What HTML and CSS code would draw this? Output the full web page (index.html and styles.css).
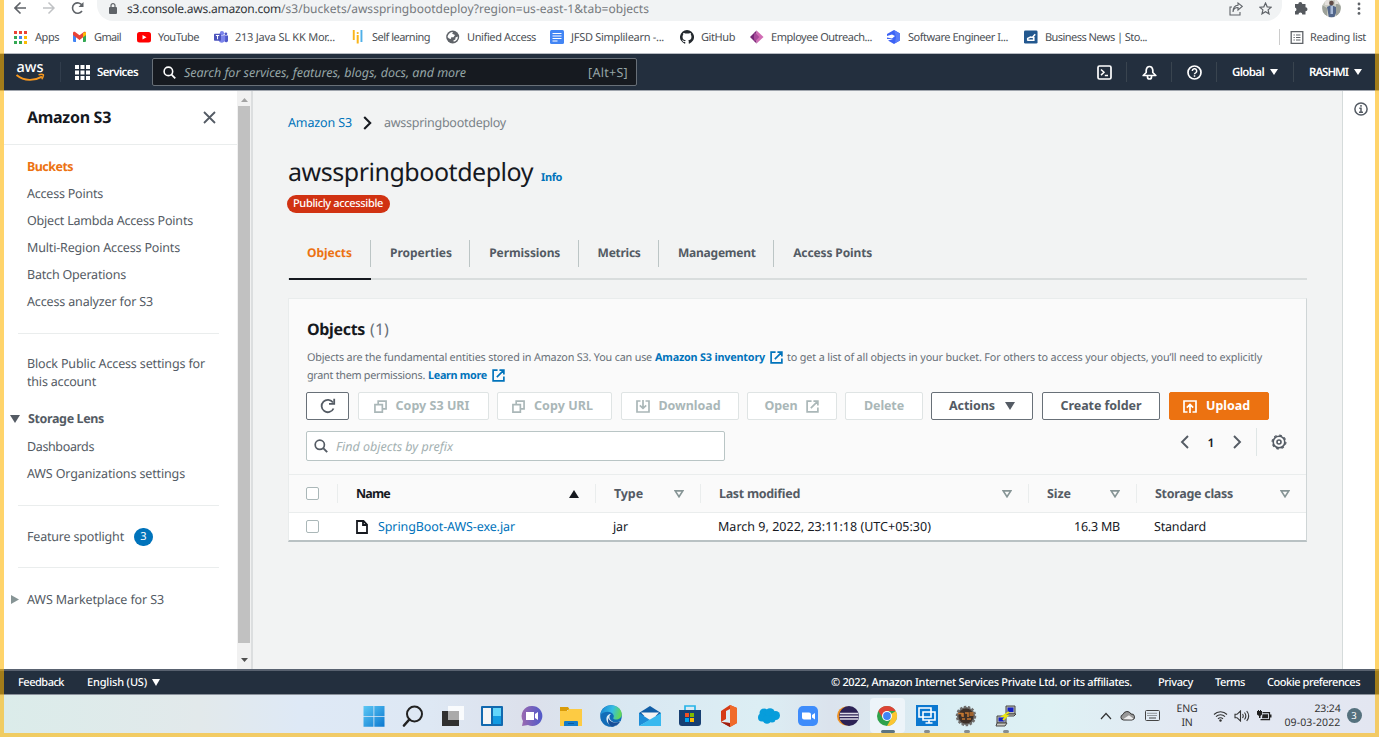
FILE: index.html
```html
<!DOCTYPE html>
<html lang="en">
<head>
<meta charset="utf-8">
<title>awsspringbootdeploy - S3 bucket</title>
<link rel="stylesheet" href="styles.css">
</head>
<body>
<svg class="defs" width="0" height="0">
  <symbol id="ext" viewBox="0 0 14 14"><path d="M6 1.2H1.2v11.6h11.6V8M8 1.2h4.8V6M12.5 1.5L5.2 8.8" fill="none" stroke="currentColor" stroke-width="1.8"/></symbol>
  <symbol id="copy" viewBox="0 0 14 14"><path d="M1 5h8v8H1zM4.5 5V1.2H13v8.3H9" fill="none" stroke="currentColor" stroke-width="1.8"/></symbol>
  <symbol id="glass" viewBox="0 0 14 14"><circle cx="5.8" cy="5.8" r="4.6" fill="none" stroke="currentColor" stroke-width="1.7"/><path d="M9.2 9.2l4 4" stroke="currentColor" stroke-width="1.9"/></symbol>
  <symbol id="down" viewBox="0 0 10 8"><path d="M0 0h10L5 8z" fill="currentColor"/></symbol>
  <symbol id="sort" viewBox="0 0 10 8"><path d="M1.2.9h7.6L5 6.8z" fill="none" stroke="#879596" stroke-width="1.6"/></symbol>
</svg>
<div class="screen">
  <header class="chrome">
    <div class="toolbar">
      <svg class="i-back" width="12" height="14" viewBox="0 0 12 14"><path d="M12 7H1.2M6.5 1.5L1 7l5.500 5.500" fill="none" stroke="#5f6368" stroke-width="1.6"/></svg>
      <svg class="i-fwd" width="12" height="14" viewBox="0 0 12 14"><path d="M0 7h10.800M5.500 1.500L11 7l-5.500 5.500" fill="none" stroke="#c0c2c5" stroke-width="1.500"/></svg>
      <svg class="i-reload" width="13" height="14" viewBox="0 0 13 14"><path d="M11 10a5.200 5.200 0 1 1 .2-5.600" fill="none" stroke="#5f6368" stroke-width="1.600"/><path d="M12.500 1v5h-5z" fill="#5f6368"/></svg>
      <div class="url">
        <svg width="8" height="11" viewBox="0 0 8 11"><rect y="4" width="8" height="7" rx="1" fill="#5f6368"/><path d="M2 4V2.600a2 2 0 0 1 4 0V4" fill="none" stroke="#5f6368" stroke-width="1.200"/></svg>
        <span class="addr"><span class="host" data-w="154">s3.console.aws.amazon.com</span><span class="path" data-w="368">/s3/buckets/awsspringbootdeploy?region=us-east-1&amp;tab=objects</span></span>
        <svg class="i-share" width="14" height="14" viewBox="0 0 14 14"><path d="M3 5H1v8h10v-3M4 10c.3-3 2-4.500 5-4.500V8l4.300-3.700L9 1v2.300C5.500 3.500 4 6 4 10z" fill="none" stroke="#5f6368" stroke-width="1.100"/></svg>
        <svg class="i-star" width="13" height="13" viewBox="0 0 14 14"><path d="M7 1.200l1.800 4 4.300.4-3.300 2.900 1 4.300L7 10.500l-3.800 2.300 1-4.300L.9 5.600l4.300-.4z" fill="none" stroke="#5f6368" stroke-width="1.300"/></svg>
      </div>
      <svg class="i-puzzle" width="14" height="14" viewBox="0 0 14 14"><path d="M4.300 3a2 2 0 0 1 4 0h3.200v3.200a2 2 0 0 1 0 4V13.500H8.300a1.900 1.900 0 0 0-3.800 0H1v-3.200a1.900 1.900 0 0 0 0-3.700V3z" fill="#55595e"/></svg>
      <svg class="i-avatar" width="19" height="19" viewBox="0 0 19 19"><clipPath id="av"><circle cx="9.500" cy="9" r="9.300"/></clipPath><g clip-path="url(#av)"><path fill="#c9cbc2" d="M0 0h19v19H0z"/><path fill="#9da199" d="M0 6l5 3v10H0zM14 4l5 3v11h-5z"/><path fill="#e4e0dc" d="M3 0h4v6H3zM13 0h3v5h-3z"/><path fill="#52668a" d="M5 8l4-2 5 2v6l-2 5H7z"/><path fill="#a9bbd8" d="M8.500 7h2.500v8H8.500z"/><circle cx="9.500" cy="4" r="2.300" fill="#5f4a45"/></g></svg>
      <svg class="i-dots" width="4" height="13" viewBox="0 0 4 13"><g fill="#5f6368"><circle cx="2" cy="2" r="1.400"/><circle cx="2" cy="6.700" r="1.400"/><circle cx="2" cy="11.400" r="1.400"/></g></svg>
    </div>
    <nav class="marks">
      <a><svg width="14" height="14" viewBox="0 0 14 14"><path fill="#ea4335" d="M0 1h3v3H0zM5 1h3v3H5zM10 1h3v3h-3z"/><path fill="#34a853" d="M0 6h3v3H0zM0 11h3v3H0z"/><path fill="#4285f4" d="M5 6h3v3H5z"/><path fill="#fbbc04" d="M10 6h3v3h-3zM10 11h3v3h-3z"/><path fill="#34a853" d="M5 11h3v3H5z"/></svg><span data-w="24">Apps</span></a>
      <a><svg width="14" height="14" viewBox="0 0 14 14"><path fill="#4285f4" d="M0 3l3 2v7H1a1 1 0 0 1-1-1z"/><path fill="#34a853" d="M13 3l-3 2v7h2a1 1 0 0 0 1-1z"/><path fill="#ea4335" d="M0 3.200C0 1.800 1.500 1.500 2.500 2.300l4 3 4-3C11.500 1.500 13 1.800 13 3.200V5L6.500 10 0 5z"/><path fill="#fbbc04" d="M10 3l3-1v3l-3 2.200z"/></svg><span data-w="27">Gmail</span></a>
      <a><svg width="14" height="14" viewBox="0 0 14 14"><rect y="2" width="14" height="10.500" rx="2.500" fill="#f00"/><path d="M5.500 5v4.500l4-2.250z" fill="#fff"/></svg><span data-w="41">YouTube</span></a>
      <a><svg width="15" height="14" viewBox="0 0 15 14"><circle cx="8.500" cy="3" r="2.300" fill="#7b83eb"/><circle cx="12.700" cy="3.600" r="1.500" fill="#5059c9"/><path fill="#5059c9" d="M10 5.500h5V10a2 2 0 0 1-4 1z"/><path fill="#7b83eb" d="M5 5.500h7v4.500a3.700 3.700 0 0 1-7 1z"/><rect y="3.500" width="7.500" height="7.500" rx=".8" fill="#4b53bc"/><path d="M2 5.500h3.600M3.800 5.500v4" stroke="#fff" stroke-width="1.100"/></svg><span data-w="100">213 Java SL KK Mor...</span></a>
      <a><svg width="14" height="14" viewBox="0 0 14 14"><path fill="#f9b51b" d="M1.800 0h1.900v10H1.800zM5.700 5h2v8.500h-2z"/><circle cx="6.700" cy="3" r="1.100" fill="#f9b51b"/><path fill="#4fb0e8" d="M9.500 0h1.900v12H9.500z"/></svg><span data-w="58">Self learning</span></a>
      <a><svg width="14" height="14" viewBox="0 0 14 14"><circle cx="6.700" cy="7" r="6.500" fill="#5f6368"/><path fill="#fff" d="M1.500 7C2 4 4 2 7 2l-.8 1.800L9 5 7.500 7.300H5.200L5 9 3 8.500zM9.500 7.500l2.300-1c.3 2.300-1.300 4.700-4 5.300l-.5-1.300 2-1z"/></svg><span data-w="69">Unified Access</span></a>
      <a><svg width="14" height="14" viewBox="0 0 14 14"><rect width="14" height="14" rx="1.500" fill="#4285f4"/><path d="M2.500 3.500h9M2.500 6h9M2.500 8.500h9M2.500 11h5" stroke="#fff" stroke-width="1.200"/></svg><span data-w="93">JFSD Simplilearn -...</span></a>
      <a><svg width="14" height="14" viewBox="0 0 16 16"><path fill="#24292e" d="M8 0a8 8 0 0 0-2.530 15.590c.4.070.55-.17.55-.38v-1.490c-2.230.48-2.690-.950-2.690-.950-.36-.92-.89-1.170-.89-1.170-.73-.5.050-.49.050-.49.81.06 1.230.83 1.230.83.72 1.230 1.870.87 2.330.66.07-.52.28-.87.500-1.070-1.780-.200-3.640-.89-3.640-3.950 0-.87.310-1.590.820-2.150-.080-.200-.360-1.020.080-2.120 0 0 .670-.210 2.200.820a7.600 7.600 0 0 1 4 0c1.530-1.040 2.200-.82 2.200-.82.44 1.100.16 1.920.08 2.120.51.56.82 1.270.82 2.150 0 3.070-1.870 3.750-3.650 3.950.29.25.54.73.54 1.480v2.200c0 .21.15.46.55.38A8 8 0 0 0 8 0z"/></svg><span data-w="34">GitHub</span></a>
      <a><svg width="15" height="14" viewBox="0 0 15 14"><path fill="#742774" d="M7 0v14L0 7z"/><path fill="#d16cb4" d="M7 0l7.500 7L7 14z"/><path fill="#a84a9a" d="M5 2l5 5-5 5-1-5z"/></svg><span data-w="101">Employee Outreach...</span></a>
      <a><svg width="14" height="14" viewBox="0 0 14 14"><path fill="#3d63f5" d="M7 0l6 3.500v7L7 14l-6-3.500L6 9 0 9V4z"/><path d="M0 6l5-1.500L8 6 5 8.500 0 7.500z" fill="#fff"/><path d="M7 0l6 3.500v7L8 13l1-6z" fill="#587cf8"/></svg><span data-w="100">Software Engineer I...</span></a>
      <a><svg width="15" height="14" viewBox="0 0 15 14"><rect width="14.500" height="14" rx="1.500" fill="#23588f"/><path d="M4 11V8.500L7 7l2 .5 3-3.500M4 10.500h6.500V7" fill="none" stroke="#fff" stroke-width="1.700"/></svg><span data-w="102">Business News | Sto...</span></a>
      <a class="reading"><svg width="13" height="13" viewBox="0 0 13 13"><path d="M.7.7h11.600v11.600H.7z" fill="none" stroke="#5f6368" stroke-width="1.300"/><path d="M3 4h1.300M5.500 4H10M3 6.500h1.300M5.500 6.500H10M3 9h1.300M5.500 9H10" stroke="#5f6368" stroke-width="1.200"/></svg><span data-w="56">Reading list</span></a>
    </nav>
  </header>

  <header class="aws">
    <svg class="logo" width="29" height="24" viewBox="0 -4 29 24"><text x="0.500" y="10" font-size="14.500" textLength="27" lengthAdjust="spacingAndGlyphs" fill="#fff">aws</text><path d="M.5 13c8 6.500 18 6 25.500 1.600" fill="none" stroke="#f7981f" stroke-width="1.900"/><path d="M22.500 12.800c2.500-.8 5.200-.6 5 .3s-.6 3-1.800 4.200" fill="none" stroke="#f7981f" stroke-width="1.400"/></svg>
    <div class="services">
      <svg width="15" height="15" viewBox="0 0 15 15"><path fill="#fff" d="M0 0h4v4H0zM5.500 0h4v4h-4zM11 0h4v4h-4zM0 5.500h4v4H0zM5.500 5.500h4v4h-4zM11 5.500h4v4h-4zM0 11h4v4H0zM5.500 11h4v4h-4zM11 11h4v4h-4z"/></svg>
      <b data-w="41">Services</b>
    </div>
    <div class="search"><svg width="13" height="13"><use href="#glass"/></svg><i data-w="282">Search for services, features, blogs, docs, and more</i><span data-w="40">[Alt+S]</span></div>
    <div class="tools">
      <div><svg width="15" height="15" viewBox="0 0 15 15"><rect x="1" y="1" width="13" height="13" rx="1.500" fill="none" stroke="#fff" stroke-width="1.700"/><path d="M4 4.500l3 2.800-3 2.800M7.800 10.500H11" fill="none" stroke="#fff" stroke-width="1.500"/></svg></div>
      <div><svg width="15" height="15" viewBox="0 0 15 15"><path d="M1.200 10.500L4.200 7.500V5q.5-3.500 3.300-3.500T10.800 5v2.500l3 3zM5.500 11v1a2 2 0 0 0 4 0v-1" fill="none" stroke="#fff" stroke-width="1.700" stroke-linejoin="round"/></svg></div>
      <div><svg width="15" height="15" viewBox="0 0 15 15"><circle cx="7.500" cy="7.500" r="6.500" fill="none" stroke="#fff" stroke-width="1.700"/><path d="M5.300 5.900a2.200 2.200 0 1 1 3.300 1.900c-.8.4-1.100.6-1.100 1.400M7.500 10.200v1.600" fill="none" stroke="#fff" stroke-width="1.500"/></svg></div>
      <div><b data-w="32">Global</b><svg width="8" height="6" viewBox="0 0 10 8" preserveAspectRatio="none"><use href="#down"/></svg></div>
      <div><b data-w="39">RASHMI</b><svg width="8" height="6" viewBox="0 0 10 8" preserveAspectRatio="none"><use href="#down"/></svg></div>
    </div>
  </header>

  <div class="body">
    <aside class="side">
      <div class="side-head"><h2 data-w="84">Amazon S3</h2><svg width="13" height="13" viewBox="0 0 13 13"><path d="M1 1l11 11M12 1L1 12" stroke="#545b64" stroke-width="1.800"/></svg></div>
      <ul>
        <li class="on"><span data-w="46">Buckets</span></li>
        <li><span data-w="76">Access Points</span></li>
        <li><span data-w="166">Object Lambda Access Points</span></li>
        <li><span data-w="153">Multi-Region Access Points</span></li>
        <li><span data-w="99">Batch Operations</span></li>
        <li><span data-w="126">Access analyzer for S3</span></li>
      </ul>
      <hr>
      <p class="block"><span data-w="178">Block Public Access settings for</span><br><span data-w="69">this account</span></p>
      <div class="sect lens"><svg width="10" height="8"><use href="#down"/></svg><b data-w="76">Storage Lens</b></div>
      <ul class="tight">
        <li><span data-w="67">Dashboards</span></li>
        <li><span data-w="158">AWS Organizations settings</span></li>
      </ul>
      <hr>
      <div class="feature"><span data-w="97">Feature spotlight</span><em>3</em></div>
      <hr>
      <div class="sect market"><svg width="8" height="9" viewBox="0 0 8 9"><path d="M0 0l8 4.500L0 9z" fill="#879596"/></svg><span data-w="137">AWS Marketplace for S3</span></div>
    </aside>
    <div class="scroll">
      <svg width="7" height="4" viewBox="0 0 7 4"><path d="M3.500 0L7 4H0z" fill="#a3a3a3"/></svg>
      <div class="thumb"></div>
      <svg width="7" height="4" viewBox="0 0 7 4"><path d="M0 0h7L3.500 4z" fill="#505050"/></svg>
    </div>

    <main class="main">
      <div class="crumbs"><a data-w="64">Amazon S3</a><svg width="9" height="14" viewBox="0 0 9 14"><path d="M1.200 1l6 6-6 6" fill="none" stroke="#16191f" stroke-width="2.100"/></svg><span data-w="122">awsspringbootdeploy</span></div>
      <div class="title"><h1 data-w="245">awsspringbootdeploy</h1><a data-w="21">Info</a></div>
      <div class="badge"><span data-w="90">Publicly accessible</span></div>
      <nav class="tabs">
        <a class="on"><span data-w="45">Objects</span></a>
        <a><span data-w="62">Properties</span></a>
        <a><span data-w="71">Permissions</span></a>
        <a><span data-w="43">Metrics</span></a>
        <a><span data-w="78">Management</span></a>
        <a><span data-w="79">Access Points</span></a>
      </nav>
      <section class="card">
        <h3><b data-w="58">Objects</b> <span data-w="19">(1)</span></h3>
        <div class="desc">
          <div><span data-w="345">Objects are the fundamental entities stored in Amazon S3. You can use</span><a data-w="110">Amazon S3 inventory</a><svg width="13" height="13"><use href="#ext"/></svg><span data-w="475">to get a list of all objects in your bucket. For others to access your objects, you’ll need to explicitly</span></div>
          <div><span data-w="118">grant them permissions.</span><a data-w="59">Learn more</a><svg width="13" height="13"><use href="#ext"/></svg></div>
        </div>
        <div class="buttons">
          <button class="b-refresh"><svg width="16" height="16" viewBox="0 0 16 16"><path d="M13.500 10.500A6.200 6.200 0 1 1 13 4.600" fill="none" stroke="#545b64" stroke-width="1.800"/><path d="M14.200.8v5H9" fill="none" stroke="#545b64" stroke-width="1.800"/></svg></button>
          <button class="b-uri off"><svg width="13" height="13"><use href="#copy"/></svg><b data-w="74">Copy S3 URI</b></button>
          <button class="b-url off"><svg width="13" height="13"><use href="#copy"/></svg><b data-w="59">Copy URL</b></button>
          <button class="b-dl off"><svg width="14" height="13" viewBox="0 0 14 13"><path d="M4.500 1H1v11h12V1H9.500M7 0v8M3.800 5.300L7 8.300l3.200-3" fill="none" stroke="currentColor" stroke-width="1.700"/></svg><b data-w="62">Download</b></button>
          <button class="b-open off"><b data-w="33">Open</b><svg width="13" height="13"><use href="#ext"/></svg></button>
          <button class="b-del off"><b data-w="40">Delete</b></button>
          <button class="b-act"><b data-w="46">Actions</b><svg width="10" height="8"><use href="#down"/></svg></button>
          <button class="b-new"><b data-w="81">Create folder</b></button>
          <button class="b-up"><svg width="14" height="13" viewBox="0 0 14 13"><path d="M4.500 12H1V1h12v11H9.500M7 13V5M3.800 7.700L7 4.500l3.200 3.200" fill="none" stroke="currentColor" stroke-width="1.700"/></svg><b data-w="44">Upload</b></button>
        </div>
        <div class="filter">
          <div class="find"><svg width="14" height="14"><use href="#glass"/></svg><i data-w="117">Find objects by prefix</i></div>
          <div class="pager">
            <svg width="9" height="14" viewBox="0 0 9 14"><path d="M8 1L2 7l6 6" fill="none" stroke="#545b64" stroke-width="1.900"/></svg>
            <b>1</b>
            <svg width="9" height="14" viewBox="0 0 9 14"><path d="M1 1l6 6-6 6" fill="none" stroke="#545b64" stroke-width="1.900"/></svg>
            <div class="gear"><svg width="16" height="16" viewBox="0 0 16 16"><circle cx="8" cy="8" r="5.800" fill="none" stroke="#545b64" stroke-width="1.600"/><circle cx="8" cy="8" r="6.900" fill="none" stroke="#545b64" stroke-width="1.200" stroke-dasharray="2.700 2.719"/><circle cx="8" cy="8" r="2" fill="none" stroke="#545b64" stroke-width="1.600"/></svg></div>
          </div>
        </div>
        <div class="row head">
          <div><span class="cb"></span></div>
          <div class="name"><b data-w="34">Name</b><svg width="10" height="8" viewBox="0 0 10 8"><path d="M5 0l5 8H0z" fill="#16191f"/></svg></div>
          <div><b data-w="29">Type</b><svg width="10" height="8"><use href="#sort"/></svg></div>
          <div><b data-w="81">Last modified</b><svg width="10" height="8"><use href="#sort"/></svg></div>
          <div><b data-w="24">Size</b><svg width="10" height="8"><use href="#sort"/></svg></div>
          <div><b data-w="78">Storage class</b><svg width="10" height="8"><use href="#sort"/></svg></div>
        </div>
        <div class="row data">
          <div><span class="cb"></span></div>
          <div class="file"><svg width="12" height="14" viewBox="0 0 12 14"><path d="M1 1h6.500L11 4.500V13H1zM7 1v4h4" fill="none" stroke="#16191f" stroke-width="1.800"/></svg><a data-w="137">SpringBoot-AWS-exe.jar</a></div>
          <div><span data-w="15">jar</span></div>
          <div><span data-w="213">March 9, 2022, 23:11:18 (UTC+05:30)</span></div>
          <div class="num"><span data-w="46">16.3 MB</span></div>
          <div><span data-w="52">Standard</span></div>
        </div>
      </section>
    </main>
    <aside class="help"><svg width="14" height="14" viewBox="0 0 14 14"><circle cx="7" cy="7" r="6.100" fill="none" stroke="#545b64" stroke-width="1.500"/><path d="M7 3v1.700M5.300 6.300H7v4M5 10.300h4" fill="none" stroke="#545b64" stroke-width="1.500"/></svg></aside>
  </div>

  <footer class="foot">
    <b data-w="46">Feedback</b><b class="lang" data-w="60">English (US)</b><svg width="8" height="7" viewBox="0 0 10 8" preserveAspectRatio="none"><use href="#down"/></svg>
    <b class="copyr" data-w="301">© 2022, Amazon Internet Services Private Ltd. or its affiliates.</b><b class="priv" data-w="35">Privacy</b><b class="terms" data-w="30">Terms</b><b class="cook" data-w="93">Cookie preferences</b>
  </footer>

  <div class="taskbar">
    <div class="apps">
      <div><svg viewBox="0 0 22 22"><defs><linearGradient id="w" x2="1" y2="1"><stop stop-color="#5cc8f5"/><stop offset="1" stop-color="#0b78d0"/></linearGradient></defs><path fill="url(#w)" d="M.5 1h10v10H.5zM11.300 1h10.200v10H11.300zM.5 11.700h10v10H.5zM11.300 11.700h10.200v10H11.300z"/></svg></div>
      <div><svg viewBox="0 0 22 22"><circle cx="12.500" cy="9" r="7.500" fill="none" stroke="#222" stroke-width="2"/><path d="M7.300 14.500L2 20.500" stroke="#222" stroke-width="2.600" stroke-linecap="round"/></svg></div>
      <div><svg viewBox="0 0 22 22"><path fill="#303030" d="M0 6h17v15H0z"/><path fill="#fff" fill-opacity=".82" d="M6 1h16v14H6z"/><path fill="#aaa" d="M6 6h11v9H6z"/></svg></div>
      <div><svg viewBox="0 0 22 22"><rect width="22" height="20" y="1" rx="1" fill="#1269af"/><path fill="#f5f5f5" d="M2 3h8v16H2z"/><path fill="#62d5fb" d="M12 3h8v8h-8z"/><path fill="#119ae2" d="M12 11h8v8h-8z"/></svg></div>
      <div><svg viewBox="0 0 22 22"><defs><linearGradient id="c" x2="1"><stop stop-color="#9a69b0"/><stop offset="1" stop-color="#5059c9"/></linearGradient></defs><path fill="url(#c)" d="M11 1a10 10 0 1 1-4 19l-6 1 1-5A10 10 0 0 1 11 1z"/><path fill="#fff" d="M5 7h8v8H5zM14 9l3-2v8l-3-2z"/></svg></div>
      <div><svg viewBox="0 0 22 22"><path fill="#d99b09" d="M0 2h8l2 3h-3v3H0z"/><path fill="#fdcb43" d="M0 6h7l2-2h13v17H0z"/><path fill="#157cc9" d="M4 21v-4q0-1 1-1h12q1 0 1 1v4z"/><path d="M8 18.500h6" stroke="#0c59a4"/></svg></div>
      <div><svg viewBox="0 0 22 22"><defs><linearGradient id="e" x2="1" y2=".2"><stop stop-color="#1780cf"/><stop offset=".6" stop-color="#35bde5"/><stop offset="1" stop-color="#61d65b"/></linearGradient></defs><circle cx="11" cy="11" r="10.800" fill="#126db8"/><path d="M.3 10C1 3.500 6 .2 11 .2c7 0 11 5 10.800 9.500-.2 4-5 5.800-8 4.300-1.500-1 .8-1.600-.3-4C11.500 6 4.500 5.500.3 10z" fill="url(#e)"/><path d="M20.500 16c-3 2-7 2-9.500-.5S9.500 10 11 9c-3 0-5 2.500-4.500 6 .6 4 5 6.500 8 6a11 11 0 0 0 6-5z" fill="#d9ebf4"/><path d="M20 16.500a11 11 0 0 1-8 5.200C8 20 7.500 16 8.500 13c1 4 6 6 11.500 3.500z" fill="#174f98"/></svg></div>
      <div><svg viewBox="0 0 22 22"><path fill="#115ea6" d="M0 8l11-7 11 7v3H0z"/><path fill="#f4f4f4" d="M2 7.500h18L11 17z"/><path fill="#1e8ed8" d="M0 8l11 7L0 21z"/><path fill="#39b9ef" d="M22 8v13H0z"/></svg></div>
      <div><svg viewBox="0 0 22 22"><path d="M6 5V1h10v4" fill="none" stroke="#27b5e8" stroke-width="1.700"/><path fill="#173f72" d="M0 5h22v13q0 3-3 3H3q-3 0-3-3z"/><path fill="#f25022" d="M6 8h4v4H6z"/><path fill="#7fba00" d="M11 8h4v4h-4z"/><path fill="#00a4ef" d="M6 13h4v4H6z"/><path fill="#ffb900" d="M11 13h4v4h-4z"/></svg></div>
      <div><svg viewBox="0 0 22 22"><path fill="#d63b15" d="M3 6l9-6 7 3v15l-7 4-9-5 9 1V4L8 6v8l-5 3z"/><path fill="#f06b2b" d="M12 0l7 3v15l-7 4z"/><path fill="#9e1e10" d="M3 17l9 1v4z"/></svg></div>
      <div><svg viewBox="0 0 22 22"><g fill="#079ddb"><circle cx="6" cy="8" r="4.500"/><circle cx="12" cy="8" r="4.800"/><circle cx="17.500" cy="10.500" r="4.500"/><circle cx="4" cy="12.500" r="4"/><circle cx="9" cy="14.500" r="4.300"/><circle cx="14" cy="14" r="3.500"/></g></svg></div>
      <div><svg viewBox="0 0 22 22"><rect x="1" y="1" width="20" height="20" rx="5" fill="#3e8cfb"/><path fill="#fff" d="M5 7.500h7q2 0 2 2v5H7q-2 0-2-2zM15 10l3-2v6.500l-3-2z"/></svg></div>
      <div><svg viewBox="0 0 22 22"><circle cx="9.500" cy="11" r="9.500" fill="#f09224"/><circle cx="12" cy="11" r="10" fill="#2c2255"/><path d="M3 8.500h18M2.500 11.300h19M3 14h18" stroke="#dcdae6" stroke-width="1.500"/></svg></div>
      <div class="active"><svg viewBox="0 0 22 22"><circle cx="11" cy="11" r="10" fill="#2fa24b"/><path fill="#fcc531" d="M11 11h1l7.700-5A10 10 0 0 1 11 21l4.500-8z"/><path fill="#dd4436" d="M11 6h8.700A10 10 0 0 0 2.300 6L6 12z"/><circle cx="11" cy="11" r="5" fill="#fff"/><circle cx="11" cy="11" r="3.900" fill="#4285f4"/></svg></div>
      <div class="run"><svg viewBox="0 0 22 22"><path fill="#0b78d0" d="M0 0h22v21H0z"/><path d="M3 3h12v9H3zM7 7h12v8H7zM13 15v3M9.500 18h7" fill="#0b78d0" stroke="#fff" stroke-width="1.600"/></svg></div>
      <div class="run"><svg viewBox="0 0 22 22"><circle cx="11" cy="11" r="9" fill="#65625f" stroke="#6f6d6b" stroke-width="2.500" stroke-dasharray="2.400 1.600"/><circle cx="11" cy="11" r="7.500" fill="#3d3028"/><path d="M3 8.500h4v3M8 8v4M10 8h3v4M14.500 8h4M14.500 10h4M7 14h3M12 14h4" stroke="#c27630" stroke-width="1.600" fill="none"/></svg></div>
      <div class="run"><svg viewBox="0 0 22 22"><path fill="#bebeb5" stroke="#444" d="M11 1h9v8h-9zM2 11h9v7H2z"/><path fill="#1520c5" d="M12.500 2.500h6v4.500h-6zM3.500 12.500h6v4h-6z"/><path fill="#c9c9c0" stroke="#444" d="M12 9h9l-2 2h-8zM2 18h10l-2 3H1z"/><path d="M14 7l-6 4h4l-4 4" stroke="#e9e515" stroke-width="1.800" fill="none"/></svg></div>
    </div>
    <div class="tray">
      <svg class="t-chev" width="12" height="8" viewBox="0 0 12 8"><path d="M1 7l5-5.500L11 7" fill="none" stroke="#333" stroke-width="1.200"/></svg>
      <svg class="t-cloud" width="15" height="11" viewBox="0 0 15 11"><path d="M3.500 10A2.800 2.800 0 0 1 3 4.500 4.300 4.300 0 0 1 11 4a3 3 0 0 1 1 6z" fill="#999" stroke="#333"/><path d="M3 9.300l6-4 4.500 3.500-1.500.7z" fill="#eee"/></svg>
      <svg class="t-key" width="15" height="11" viewBox="0 0 15 11"><rect x=".5" y=".5" width="14" height="10" rx="1" fill="none" stroke="#444"/><path d="M2.500 3.300h10M2.500 5.500h10" stroke="#444" stroke-dasharray="1 1"/><path d="M4 8h7" stroke="#444"/></svg>
      <div class="lang2"><span data-w="21">ENG</span><span data-w="11">IN</span></div>
      <svg class="t-wifi" width="15" height="12" viewBox="0 0 15 12"><path d="M1 4.500a9.200 9.200 0 0 1 13 0M3 6.700a6.300 6.300 0 0 1 9 0M5 8.800a3.500 3.500 0 0 1 5 0" fill="none" stroke="#333" stroke-width="1.100"/><circle cx="7.500" cy="10.500" r="1.200" fill="#333"/></svg>
      <svg class="t-snd" width="16" height="12" viewBox="0 0 16 12"><path d="M1 4.300h2L6.500 1v10L3 7.700H1zM8.500 4q1.500 2 0 4M10.500 2.500q2.700 3.500 0 7M12.700 1q4 5 0 10" fill="none" stroke="#333" stroke-width="1.100"/></svg>
      <svg class="t-bat" width="15" height="11" viewBox="0 0 15 11"><path fill="#222" d="M0 1h1V0h1v1h1V0h1v1h1v3.500L3.500 6v2H2V6L0 4.500z"/><path d="M5.500 2.600h7v7h-9" fill="none" stroke="#222" stroke-width="1.200"/><path fill="#222" d="M5.500 4.200H11v4H5zM13 4.500h1.500v3H13z"/></svg>
      <div class="clock"><span data-w="26">23:24</span><span data-w="56">09-03-2022</span></div>
      <em>3</em>
    </div>
  </div>
  <div class="frame"></div>
</div>
<script src="fit.js"></script>
</body>
</html>
```
FILE: styles.css
```css
* { box-sizing: border-box; }
body { margin: 0; overflow: hidden; font-family: "Noto Sans", "Open Sans", sans-serif; font-size: 12.5px; color: #545b64; text-rendering: geometricPrecision; }
svg { display: block; flex: none; }
.defs { position: absolute; }
[data-w] { display: inline-block; white-space: nowrap; flex: none; }
h1, h2, h3, p, ul { margin: 0; padding: 0; }
ul { list-style: none; }
b, h2, h3 { font-weight: 600; }
em { font-style: normal; }
.screen { position: relative; width: 1379px; height: 737px; display: flex; flex-direction: column; overflow: hidden; background: #fff; }
.frame { position: absolute; inset: 0; border: solid rgba(255, 181, 0, .58); border-width: 0 4px 4px; pointer-events: none; }

/* Browser chrome */
.chrome { height: 53px; background: #fff; flex: none; }
.toolbar { height: 21px; display: flex; align-items: flex-start; padding-left: 14px; }
.i-back, .i-fwd, .i-reload { margin-top: 1px; }
.i-fwd { margin-left: 17px; }
.i-reload { margin-left: 16px; }
.url { width: 1185px; height: 21px; margin-left: 13px; padding: 0 10px 4px 12px; background: #f1f3f4; border-radius: 0 0 16px 16px; display: flex; align-items: center; }
.addr { margin-left: 10px; font-size: 12px; line-height: 17px; display: flex; color: #75797d; }
.host { color: #303338; }
.i-share { margin-left: auto; }
.i-star { margin-left: 16px; }
.i-puzzle { margin: 1px 0 0 12px; }
.i-avatar { margin-left: 14px; margin-top: -1px; }
.i-dots { margin: 2px 0 0 16px; }
.marks { height: 32px; padding-left: 14px; display: grid; grid-template-columns: 59px 64px 77px 137px 95px 104px 130px 70px 137px 137px 255px 90px; align-items: center; font-size: 11px; color: #4c5055; }
.marks a { display: flex; align-items: center; gap: 7px; height: 16px; }
.marks a svg { width: 14px; }
.marks .reading { border-left: 1px solid #ccc; padding-left: 10px; gap: 6px; }

/* Console bar */
.aws { height: 38px; background: #232f3e; border-top: 1px solid #b7bbc2; border-bottom: 1px solid #a0a5ad; display: flex; align-items: center; color: #fff; padding-left: 16px; font-size: 11.5px; flex: none; }
.logo { font-family: "Noto Sans", sans-serif; font-weight: 500; margin-top: -5px; overflow: visible; }
.services { height: 20px; margin-left: 15px; padding-left: 14px; border-left: 1px solid #313d4c; display: flex; align-items: center; gap: 7px; }
.search { width: 485px; height: 28px; margin-left: 14px; background: #161a20; border: 1px solid #687078; border-radius: 2px; display: flex; align-items: center; padding: 0 8px 0 10px; font-size: 12.5px; color: #95a5a6; }
.search svg { color: #fff; }
.search i { margin-left: 8px; }
.search span { margin-left: auto; }
.tools { margin-left: auto; display: flex; padding-right: 17px; }
.tools div { height: 20px; display: flex; align-items: center; gap: 6px; padding: 0 14px 0 15px; border-left: 1px solid #39444f; }
.tools div:first-child { border: 0; }
.tools div:nth-child(4) { padding-right: 15px; }
.tools div:last-child { padding-right: 0; }

/* Page body */
.body { height: 578px; display: flex; flex: none; }
.side { width: 237px; padding-left: 4px; color: #545b64; }
.side-head { height: 54px; border-bottom: 1px solid #eaeded; padding: 0 21px 1px 23px; display: flex; align-items: center; justify-content: space-between; }
.side-head h2 { font-size: 16px; color: #16191f; font-weight: 700; }
.side ul { padding: 8px 0 0 23px; }
.side ul.tight { padding-top: 1px; }
.side li { height: 27px; line-height: 27px; }
.side .on { color: #ec7211; font-weight: 700; }
.side hr { border: 0; height: 1px; background: #eaeded; margin: 18px 18px 0 14px; }
.block { margin: 21px 0 0 23px; line-height: 18px; }
.sect { height: 27px; padding-left: 6px; display: flex; align-items: center; }
.sect b, .sect > span { margin-left: 8px; }
.lens { margin-top: 14px; }
.lens b { font-weight: 700; }
.market { margin-top: 18px; padding-left: 7px; }
.feature { margin: 17px 0 0 23px; height: 27px; display: flex; align-items: center; gap: 10px; }
.feature em { width: 19px; height: 18px; border-radius: 9px; background: #0073bb; color: #fff; font-size: 11px; line-height: 18px; text-align: center; }
.side .feature + hr { margin-top: 17px; }
.scroll { width: 16px; border-right: 2px solid #dcdedf; background: #f1f1f1; display: flex; flex-direction: column; align-items: center; padding: 7px 0; }
.thumb { width: 12px; height: 537px; margin: 4px 0 15px; background: #c1c1c1; }
.main { width: 1090px; background: #f2f3f3; padding: 18px 0 0 35px; border-right: 1px solid #d5dbdb; }
.help { width: 36px; padding: 11px 0 0 11px; }

.main a { color: #0073bb; }
.crumbs { height: 27px; display: flex; align-items: center; color: #7a8288; }
.crumbs svg { margin: 0 12px 0 11px; }
.title { height: 58px; display: flex; align-items: baseline; padding-top: 18px; }
.title h1 { font-size: 25px; line-height: 36px; font-weight: 400; color: #16191f; }
.title a { margin-left: 8px; font-size: 11px; font-weight: 700; }
.badge { width: 103px; height: 18px; border-radius: 9px; background: #d13212; color: #fff; font-size: 11px; line-height: 18px; font-weight: 500; padding-left: 6px; margin: 1px 0 0 -1px; }
.tabs { width: 1019px; height: 67px; border-bottom: 2px solid #d9dddd; display: flex; padding: 27px 0 0 1px; font-weight: 700; font-size: 12px; }
.tabs a { height: 27px; line-height: 26px; color: #545b64; border-right: 1px solid #bcc5c5; padding: 0 17.3px 0 19px; }
.tabs a:last-child { border: 0; }
.tabs .on { height: 40px; width: 82px; color: #ec7211; padding: 0 0 0 18px; border-right: 0; border-bottom: 2px solid #16191f; background: linear-gradient(#bcc5c5, #bcc5c5) right top / 1px 27px no-repeat; }

/* Objects card */
.card { width: 1019px; height: 244px; margin-top: 18px; background: #fafafa; border: 1px solid #e9ecec; border-bottom: 2px solid #b9c1c3; border-right-color: #cfd5d6; }
.card h3 { height: 26px; margin: 17px 0 0 18px; line-height: 26px; font-size: 16px; display: flex; gap: 5px; color: #16191f; }
.card h3 b { font-weight: 700; }
.card h3 span { font-weight: 400; color: #687078; }
.desc { margin: 6px 0 0 18px; font-size: 10.8px; color: #687078; }
.desc div { height: 18px; display: flex; align-items: center; }
.desc a { font-weight: 700; margin-left: 3px; }
.desc svg { color: #0073bb; margin: 0 4px 0 5px; }
.buttons { margin: 8px 0 0 17px; display: flex; }
button { height: 28px; padding: 0; background: #fff; border: 1px solid #687078; border-radius: 2px; font: 600 12.5px "Noto Sans", sans-serif; color: #545b64; display: flex; align-items: center; justify-content: center; gap: 9px; flex: none; }
button b { font-weight: 700; margin-top: -1px; }
.off { color: #aab7b8; border-color: #dfe4e4; }
.b-refresh { width: 43px; }
.b-uri { width: 131px; margin-left: 9px; padding-right: 4px; }
.b-url { width: 115px; margin-left: 8px; padding-right: 4px; }
.b-dl { width: 118px; margin-left: 9px; padding-right: 4px; }
.b-open { width: 90px; margin-left: 8px; }
.b-del { width: 78px; margin-left: 8px; }
.b-act { width: 102px; margin-left: 8px; gap: 10px; }
.b-new { width: 118px; margin-left: 9px; }
.b-up { width: 100px; margin-left: 9px; background: #ec7211; border-color: #ec7211; color: #fff; padding-right: 5px; }
.filter { height: 54px; display: flex; align-items: flex-start; padding: 11px 0 0 17px; }
.find { width: 419px; height: 30px; background: #fff; border: 1px solid #b9c5c5; border-radius: 2px; display: flex; align-items: center; padding-left: 7px; color: #545b64; }
.find i { margin-left: 8px; color: #a4b1b2; }
.pager { margin: -3px 19px 0 auto; height: 28px; display: flex; align-items: center; }
.pager b { width: 44px; text-align: center; color: #16191f; font-size: 12px; }
.gear { height: 28px; margin-left: 14px; padding-left: 14px; border-left: 1px solid #dfe6e6; display: flex; align-items: center; }
.row { display: grid; grid-template-columns: 49px 258px 105px 328px 108px 169px; align-items: center; }
.head { height: 39px; border-top: 1px solid #eaeded; border-bottom: 1px solid #eaeded; color: #545b64; }
.head b { font-weight: 700; }
.head div { height: 19px; border-right: 1px solid #eaeded; padding: 0 16px 0 18px; display: flex; align-items: center; justify-content: space-between; }
.head div:last-child { border: 0; }
.head .name { color: #16191f; }
.row div:first-child { padding-left: 17px; }
.cb { display: block; width: 13px; height: 13px; background: #fff; border: 1px solid #aab7b8; border-radius: 2px; flex: none; }
.data { height: 27px; background: #fff; color: #16191f; }
.data > div { padding-left: 17px; }
.data .file { padding-left: 18px; display: flex; align-items: center; gap: 10px; }
.data .num { padding: 0 17px 0 0; text-align: right; }

/* Console footer */
.foot { height: 26px; background: #232f3e; border-top: 2px solid #596270; border-bottom: 1px solid #8a919b; color: #fff; font-size: 11px; display: flex; align-items: center; padding-left: 18px; flex: none; }
.foot b { font-weight: 500; }
.lang { margin: 0 5px 0 23px; }
.copyr { margin-left: 671px; }
.priv { margin-left: 26px; }
.terms { margin-left: 22px; }
.cook { margin-left: 22px; }

/* Desktop taskbar */
.taskbar { height: 42px; display: flex; padding-left: 354px; background: linear-gradient(90deg, #dbecea, #e2e9eb 200px, #dee9f6 300px, #dee8f4 430px, #dce0eb 530px, #d9e8f2 630px, #dceef4 760px, #dbe3ed 830px, #daeef4 950px, #def1f4 1050px, #e3e9f3 1180px, #e3e6f1); }
.apps { display: grid; grid-template-columns: repeat(17, 39.5px); height: 39px; padding-top: 3px; }
.apps div { position: relative; height: 35px; width: 39.5px; display: grid; place-items: center; }
.apps svg { width: 22px; height: 22px; }
.apps .active { width: 35px; margin-left: 2px; background: #edf4f9; border-radius: 4px; }
.active::after, .run::after { content: ""; position: absolute; bottom: 0; left: 17px; width: 6px; height: 3px; border-radius: 2px; background: #858d93; }
.active::after { left: 11px; width: 14px; background: #5c7482; }
.tray { display: flex; align-items: center; height: 41px; margin-left: 74px; font-size: 10.5px; line-height: 14px; color: #333; }
.t-cloud { margin-left: 8px; }
.t-key { margin-left: 10px; }
.lang2 { margin-left: 17px; display: flex; flex-direction: column; align-items: center; }
.t-wifi { margin-left: 15px; }
.t-snd { margin-left: 6px; }
.t-bat { margin-left: 7px; }
.clock { margin-left: 13px; display: flex; flex-direction: column; align-items: flex-end; }
.tray em { margin-left: 6px; width: 15px; height: 15px; border-radius: 50%; background: #55717e; color: #fff; font-size: 9.5px; line-height: 15px; text-align: center; }
```
FILE: fit.js
```js
// Track each label so that it fills its declared width.
document.querySelectorAll("[data-w]").forEach(function (el) {
  var target = parseFloat(el.dataset.w);
  var natural = el.getBoundingClientRect().width;
  var count = el.textContent.length;
  el.style.letterSpacing = ((target - natural) / count).toFixed(3) + "px";
});
```
